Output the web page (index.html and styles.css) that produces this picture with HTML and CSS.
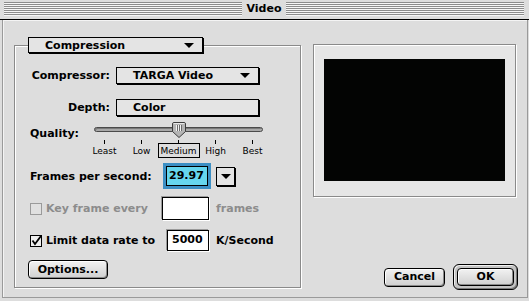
FILE: index.html
```html
<!DOCTYPE html>
<html lang="en">
<head>
    <meta charset="UTF-8">
    <title>Video</title>
    <link rel="stylesheet" href="styles.css">
</head>
<body>
    <div class="window">
        <div class="titlebar"><span class="title">Video</span></div>
        <div class="panel">
            <fieldset class="group">
                <legend class="popup legend-popup">Compression<span class="arrow"></span></legend>

                <div class="row row-compressor">
                    <span class="label">Compressor:</span>
                    <div class="popup menu">TARGA Video<span class="arrow"></span></div>
                </div>

                <div class="row row-depth">
                    <span class="label">Depth:</span>
                    <div class="popup menu">Color</div>
                </div>

                <div class="quality">
                    <span class="quality-label">Quality:</span>
                    <div class="slider">
                        <div class="track"></div>
                        <svg class="thumb" width="14" height="16" viewBox="0 0 14 16">
                            <path d="M0.5,2 Q0.5,0.5 2,0.5 H12 Q13.5,0.5 13.5,2 V9.5 L7,15.5 L0.5,9.5 Z" fill="#b4b4b4" stroke="#3c3c3c"/>
                            <path d="M1.5,1.5 H12.5" stroke="#e8e8e8"/>
                            <path d="M4.5,3 V9 M6.5,3 V9 M8.5,3 V9" stroke="#f2f2f2"/>
                            <path d="M5.5,3 V9 M7.5,3 V9 M9.5,3 V9" stroke="#6a6a6a"/>
                        </svg>
                        <div class="ticks">
                            <div class="tick"><i></i><span>Least</span></div>
                            <div class="tick"><i></i><span>Low</span></div>
                            <div class="tick selected"><i></i><span>Medium</span></div>
                            <div class="tick"><i></i><span>High</span></div>
                            <div class="tick"><i></i><span>Best</span></div>
                        </div>
                    </div>
                </div>

                <div class="row row-fps">
                    <span class="fps-label">Frames per second:</span>
                    <div class="field focused">29.97</div>
                    <div class="arrow-button"><span class="arrow"></span></div>
                </div>

                <div class="row row-key disabled">
                    <span class="check-label key-label"><span class="checkbox"></span>Key frame every</span>
                    <div class="field key-field"></div>
                    <span class="unit">frames</span>
                </div>

                <div class="row row-limit">
                    <span class="check-label limit-label">
                        <span class="checkbox">
                            <svg width="12" height="12" viewBox="0 0 12 12"><path d="M2.5,5.5 L5,9 L11,1" fill="none" stroke="#000" stroke-width="1.8"/></svg>
                        </span>Limit data rate to
                    </span>
                    <div class="field limit-field">5000</div>
                    <span class="unit">K/Second</span>
                </div>

                <button class="button options">Options...</button>
            </fieldset>

            <div class="side">
                <div class="preview"><div class="screen"></div></div>
                <div class="buttons">
                    <button class="button cancel">Cancel</button>
                    <span class="default-ring"><button class="button ok">OK</button></span>
                </div>
            </div>
        </div>
    </div>
</body>
</html>
```

FILE: styles.css
```css
* {
    box-sizing: border-box;
    margin: 0;
    padding: 0;
}

body {
    background: #dddddd;
    font-family: 'DejaVu Sans', sans-serif;
    font-size: 11px;
    font-weight: bold;
    color: #000;
}

.window {
    width: 529px;
    height: 301px;
    display: flex;
    flex-direction: column;
    background: #dddddd;
}

.titlebar {
    height: 20px;
    padding: 2px 5px 3px 4px;
    border-bottom: 1px solid #000;
    background: repeating-linear-gradient(#8c8c8c 0 1px, #f6f6f6 1px 2px) content-box, #dddddd;
    display: flex;
    justify-content: center;
}

.title {
    background: #dddddd;
    padding: 0 5px;
    line-height: 14px;
    font-size: 11px;
}

.panel {
    flex: 1;
    margin: 0 1px 3px 2px;
    border: 1px solid #9a9a9a;
    border-top: 0;
    box-shadow: inset 1px 1px #f4f4f4;
    display: flex;
    padding: 17px 0 7px 11px;
}

/* group box */

.group {
    width: 287px;
    border: 1px solid #8a8a8a;
    box-shadow: inset 1px 1px #fff, 1px 1px #fff;
    padding: 13px 0 0 15px;
    margin-bottom: 2px;
    min-width: 0;
}

.popup {
    height: 17px;
    border: 1px solid #000;
    box-shadow: 1px 1px #000;
    background: #e4e4e4;
    display: flex;
    align-items: center;
    line-height: 15px;
}

.legend-popup {
    width: 175px;
    height: 16px;
    margin-left: -2px;
    padding-left: 16px;
}

.menu {
    width: 143px;
    padding-left: 16px;
}

.arrow {
    width: 0;
    height: 0;
    border-left: 5px solid transparent;
    border-right: 5px solid transparent;
    border-top: 5px solid #000;
    margin-left: auto;
    margin-right: 8px;
}

.row {
    display: flex;
    align-items: center;
}

.label {
    width: 80px;
    text-align: right;
    margin-right: 6px;
}

.row-compressor {
    height: 19px;
}

.row-depth {
    height: 19px;
    margin-top: 13px;
}

/* slider */

.quality {
    display: flex;
    margin-top: 5px;
    height: 40px;
}

.quality-label {
    width: 64px;
    padding-top: 5px;
}

.slider {
    width: 169px;
    position: relative;
    padding-top: 5px;
}

.track {
    height: 5px;
    border: 1px solid #4a4a4a;
    border-radius: 3px;
    background: #a8a8a8;
    box-shadow: inset 1px 1px #7a7a7a;
}

.thumb {
    position: absolute;
    left: 78px;
    top: 0;
}

.ticks {
    display: flex;
    width: 185px;
    margin-left: -8px;
    margin-top: 8px;
}

.tick {
    width: 37px;
    display: flex;
    flex-direction: column;
    align-items: center;
}

.tick i {
    width: 1px;
    height: 4px;
    background: #000;
}

.tick span {
    font-weight: normal;
    font-size: 9px;
    line-height: 12px;
    margin-top: 0;
    padding: 0 2px;
    border: 1px solid transparent;
}

.tick.selected span {
    border-color: #000;
    margin-top: -1px;
    padding: 1px 2px 0;
}

/* fields */

.row-fps {
    margin-top: 1px;
    height: 26px;
}

.fps-label {
    width: 136px;
}

.field {
    background: #fff;
    border: 1px solid #000;
    box-shadow: -1px -1px #9a9a9a, 1px 1px #fff;
    padding-left: 4px;
    line-height: 18px;
}

.field.focused {
    width: 42px;
    height: 20px;
    background: #66d6ee;
    box-shadow: 0 0 0 3px #3c8fc4;
    padding-left: 2px;
}

.arrow-button {
    width: 19px;
    height: 19px;
    margin-left: 8px;
    border: 1px solid #000;
    box-shadow: 1px 1px #000;
    background: #e4e4e4;
    display: flex;
    align-items: center;
    justify-content: center;
}

.arrow-button .arrow {
    margin: 0;
}

.check-label {
    display: flex;
    align-items: center;
}

.checkbox {
    width: 12px;
    height: 12px;
    border: 1px solid #000;
    background: #eeeeee;
    margin-right: 4px;
    display: flex;
}

.checkbox svg {
    margin: -1px;
}

.row-key {
    margin-top: 8px;
    height: 23px;
    color: #8c8c8c;
}

.row-key .checkbox {
    border-color: #9a9a9a;
    background: #e0e0e0;
}

.key-label {
    width: 132px;
}

.key-field {
    width: 47px;
    height: 23px;
}

.unit {
    margin-left: 7px;
}

.row-limit {
    margin-top: 10px;
    height: 21px;
}

.limit-label {
    width: 137px;
}

.limit-field {
    width: 42px;
    height: 21px;
}

/* buttons */

.button {
    font-family: inherit;
    font-size: 11px;
    font-weight: bold;
    color: #000;
    height: 19px;
    border: 1px solid #000;
    border-radius: 4px;
    background: linear-gradient(#f2f2f2, #d0d0d0);
    box-shadow: inset 1px 1px #fff, inset -1px -1px #8a8a8a;
    line-height: 16px;
}

.options {
    width: 80px;
    margin: 9px 0 0 -2px;
}

.side {
    width: 205px;
    margin-left: 12px;
    display: flex;
    flex-direction: column;
    padding-top: 7px;
}

.preview {
    width: 203px;
    height: 153px;
    border: 1px solid #8a8a8a;
    box-shadow: inset 1px 1px #fff, 1px 1px #fff;
    background: #e6e6e6;
    padding: 14px 10px;
}

.screen {
    height: 122px;
    background: #030403;
}

.buttons {
    margin-top: auto;
    display: flex;
    align-items: center;
    justify-content: flex-end;
}

.cancel {
    width: 61px;
    margin-right: 8px;
}

.default-ring {
    width: 65px;
    height: 26px;
    border: 1px solid #000;
    border-radius: 6px;
    background: #c4c4c4;
    box-shadow: inset 1px 1px #f0f0f0, inset -1px -1px #7a7a7a;
    padding: 3px;
    display: flex;
}

.ok {
    width: 100%;
    height: 18px;
}
```
